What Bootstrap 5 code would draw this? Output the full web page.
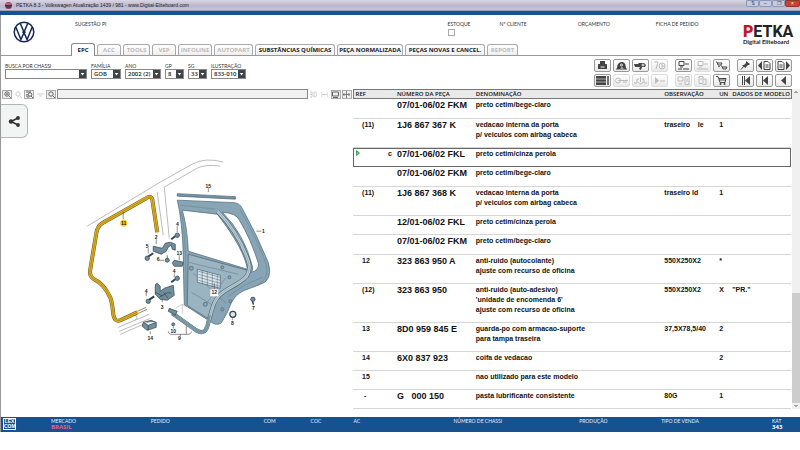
<!DOCTYPE html>
<html lang="pt-BR">
<head>
<meta charset="utf-8">
<meta name="viewport" content="width=device-width, initial-scale=1">
<title>PETKA 8.3</title>
<link href="https://cdn.jsdelivr.net/npm/bootstrap@5.3.0/dist/css/bootstrap.min.css" rel="stylesheet">
<style>
:root{--navy:#175290;--ink:#222;--rule:#d6d6d6}
body{font:5px/8px "Open Sans","Noto Sans",sans-serif;color:var(--ink);background:#fff}
button,select,input{font-family:inherit;line-height:1}
.titlebar{height:11px;background:linear-gradient(#d9d5e4,#b9b6cd 60%,#c9c5d8);border-bottom:1px solid #9f9fb5;font:5px/10px "Liberation Sans",sans-serif;padding-left:5px}
.winbtn{width:13px;height:7px;padding:0;border:1px solid #8e98b6;border-radius:0 0 2px 2px;background:#c3cbe0;color:#445;font-size:5px;line-height:5px}
.winbtn.quit{background:#c8432f;border-color:#96392d;color:#fff;width:15px}
.stripe{height:4px;background:var(--navy)}
.shell{border-left:1px solid #999}
.cap{font-family:Lato,"Open Sans",sans-serif;font-size:5px;line-height:6px;text-transform:uppercase;color:#333;white-space:nowrap}
.headgrid{display:grid;grid-template-columns:74fr 372fr 52fr 78fr 78fr 87fr 57fr;height:28px;padding-top:6px}
.headgrid>*{min-width:0}
.stockbox{width:7px;height:7px;border:1px solid #aaa;border-radius:0;margin:2px 0 0;display:block;appearance:none;background:#fff}
.brand{font:bold 16px/14px Roboto,"Liberation Sans",sans-serif;color:#222;white-space:nowrap}
.brand b{color:#c8141e}
.brandsub{font:bold 6px/6px Lato,sans-serif;color:#222;white-space:nowrap}
.tabstrip{border-bottom:1px solid #999;padding-left:70px;height:13px;gap:2px}
.tabbtn{height:11px;border:1px solid #aaa;border-bottom:0;border-radius:3px 3px 0 0;background:linear-gradient(#fff,#eee);font-size:6px;font-weight:700;line-height:10px;color:#222;padding:0;white-space:nowrap}
.tabbtn:disabled{color:#bbb}
.tabbtn.active{height:13px;margin-bottom:-1px;background:#fff;border-color:#888}
.w24{width:24px}.w27{width:27px}.w34{width:34px}.w31{width:31px}.w39{width:39px}.w66{width:66px}.w80{width:80px}
.tools{height:33px;padding:3px 8px 0 4px}
.pick{display:block;height:10px;border:1px solid #888;border-radius:0;font-size:6px;font-weight:600;color:#222;padding:0 8px 0 2px;appearance:none;background:#fff url("data:image/svg+xml,%3Csvg xmlns='http://www.w3.org/2000/svg' viewBox='0 0 7 8'%3E%3Crect width='7' height='8' fill='%23404448'/%3E%3Cpath d='M1.700 3h3.600L3.500 5.400z' fill='white'/%3E%3C/svg%3E") right 0 top 0/7px 8px no-repeat}
.p82{width:82px}.p30{width:30px}.p36{width:36px}.p19{width:19px}.p35{width:35px}
.toolset{display:flex;gap:7px}
.toolgroup{display:grid;grid-template-columns:repeat(4,17px);gap:2px;align-content:start}
.toolgroup.three-up{grid-template-columns:repeat(3,17px)}
.tool{width:17px;height:13px;border:1px solid #999;border-radius:2px;background:linear-gradient(#fff,#e9e9e9);padding:0;display:flex;align-items:center;justify-content:center;color:#444}
.tool:disabled{color:#bbb;border-color:#ddd}
.tool svg{width:13px;height:9px}
.ico{fill:none;stroke:currentColor;stroke-width:1}
.ico .f{fill:currentColor;stroke:none}
.left{flex:0 0 44%;min-width:0}
.viewbar{height:10px;gap:1px;padding:0 1px}
.mini{width:10px;height:9px;padding:0;border:1px solid #aaa;background:#eee;color:#666;display:flex;justify-content:center}
.mini:disabled{border-color:transparent;background:none;color:#ccc}
.mini svg{width:7px;height:7px}
.track{flex:1;min-width:0;height:10px;border:1px solid #888;background:#f1f1f1;padding:0;border-radius:0}
.share{left:0;top:5px;width:27px;height:34px;border:1px solid #b5b5b5;border-left:0;border-radius:0 6px 6px 0;background:#f3f5f4;padding:0}
.share svg{width:13px;height:11px}
.lbl{font:bold 5px "Liberation Sans",sans-serif;fill:#222;text-anchor:middle}
.parts{table-layout:fixed;width:100%;border-collapse:collapse;font:bold 7px/10px "Liberation Sans",sans-serif;color:#111}
.parts th{height:9px;padding:0;background:#e9e9e9;border-top:1px solid #777;border-bottom:1px solid #777;font:600 6px/7px "Open Sans",sans-serif;white-space:nowrap}
.parts th:first-child{border-left:1px solid #777;padding-left:2px}
.parts th:last-child{border-right:1px solid #777}
.parts td{height:19px;padding:1px 0 0;vertical-align:top;border-bottom:1px solid var(--rule);white-space:nowrap}
.parts td:nth-child(1){padding-left:9px}
.parts td:nth-child(2){font-size:9px}
.parts .tall td{height:20px}
.parts .two td{height:29px}
.parts .three td{height:39px}
.parts .open td{border-bottom:0}
.parts .picked{outline:1px solid #666;outline-offset:-1px}
.parts .picked td:first-child{padding-left:3px;padding-right:5px}
.flagmark{width:4px;height:6px;display:block;margin-top:1px}
.scroll{width:8px;background:#f0f0f0}
.scroll .thumb{background:#cdcdcd;flex:0 0 110px}
.scroll svg{width:8px;height:6px}
.footbar{display:grid;grid-template-columns:50fr 100fr 113fr 47fr 43fr 100fr 126fr 82fr 111fr 28fr;height:15px;background:var(--navy);color:#fff;padding-top:1px;line-height:7px;font-size:6px}
.footbar>*{min-width:0}
.footbar .cap{color:#e7eef8}
.market{color:#e0647c}
.lex{width:13px;height:12px;border:1px solid #fff;font:bold 5px/5px "Liberation Sans",sans-serif;margin-left:2px;text-align:center;white-space:nowrap}
</style>
</head>
<body>
<div class="titlebar d-flex align-items-center">
  <svg width="7" height="7" viewBox="0 0 7 7" class="me-1" aria-hidden="true"><circle cx="3.500" cy="3.500" r="3.500" fill="#963b4c"/><path d="M0 3.500h7M1 5h5" stroke="#27374f" stroke-width="1.200"/><path d="M1 2h5" stroke="#ddd" stroke-width=".6"/></svg>
  <span>PETKA 8.3 - Volkswagen Atualização 1439 / 981 - www.Digital-Eliteboard.com</span>
  <div class="ms-auto d-flex align-self-start">
    <button class="winbtn" aria-label="Ajuda">⇅</button><button class="winbtn" aria-label="Minimizar">–</button><button class="winbtn" aria-label="Restaurar">❐</button><button class="winbtn quit" aria-label="Fechar">×</button>
  </div>
</div>
<div class="stripe"></div>
<div class="shell">
<header>
  <div class="headgrid">
    <div class="ps-2 ms-1">
      <svg width="22" height="22" viewBox="0 0 22 22" role="img" aria-label="Volkswagen"><g fill="none" stroke="#14285a" stroke-width="1.500"><circle cx="11" cy="11" r="9.800"/><path d="M7.300 2.500 11 11l3.700-8.500M9.300 11.200h3.400M2.900 6.200 7.900 18.600 11 11.600l3.100 7L19.100 6.200"/></g></svg>
    </div>
    <div class="cap">Sugestão PI</div>
    <div class="cap"><label for="stock" class="d-block">Estoque</label><input type="checkbox" id="stock" class="stockbox"></div>
    <div class="cap">Nº Cliente</div>
    <div class="cap">Orçamento</div>
    <div class="cap">Ficha de pedido</div>
    <div class="pt-1"><div class="brand"><b>P</b>ETKA</div><div class="brandsub">Digital Eliteboard</div></div>
  </div>
  <nav class="tabstrip d-flex align-items-end">
    <button class="tabbtn active w24">EPC</button>
    <button class="tabbtn w24" disabled>ACC</button>
    <button class="tabbtn w27" disabled>TOOLS</button>
    <button class="tabbtn w24" disabled>VEP</button>
    <button class="tabbtn w34" disabled>INFOLINE</button>
    <button class="tabbtn w39" disabled>AUTOPART</button>
    <button class="tabbtn w80">SUBSTÂNCIAS QUÍMICAS</button>
    <button class="tabbtn w66">PEÇA NORMALIZADA</button>
    <button class="tabbtn w80">PEÇAS NOVAS E CANCEL.</button>
    <button class="tabbtn w31" disabled>REPORT</button>
  </nav>
  <div class="tools d-flex justify-content-between">
    <form class="d-flex gap-1 pt-1">
      <div><label class="cap d-block" for="chassi">Busca por chassi</label><select id="chassi" class="pick p82"><option></option></select></div>
      <div><label class="cap d-block" for="fam">Família</label><select id="fam" class="pick p30"><option>GOB</option></select></div>
      <div><label class="cap d-block" for="ano">Ano</label><select id="ano" class="pick p36"><option>2002 (2)</option></select></div>
      <div><label class="cap d-block" for="gp">GP</label><select id="gp" class="pick p19"><option>8</option></select></div>
      <div><label class="cap d-block" for="sg">SG</label><select id="sg" class="pick p19"><option>33</option></select></div>
      <div><label class="cap d-block" for="ilu">Ilustração</label><select id="ilu" class="pick p35"><option>833-010</option></select></div>
    </form>
    <div class="toolset">
      <div class="toolgroup">
        <button class="tool" aria-label="Imprimir"><svg class="ico" viewBox="0 0 13 9"><path class="f" d="M4 0h5v3h1.500l.5.500V8H2V3.500L2.500 3H4z"/><path d="M4.500 6h4" stroke="#eee"/></svg></button>
        <button class="tool" aria-label="Veículo"><svg class="ico" viewBox="0 0 13 9"><path d="M1 8h11"/><path class="f" d="M2 8c0-5 2-7 5-7s4 3 4 7H9L7 6 5 8z"/><circle cx="6.500" cy="4" r="1" stroke="#eee"/></svg></button>
        <button class="tool" aria-label="Peças"><svg class="ico" viewBox="0 0 13 9"><path class="f" d="M0 3h4l1-1h5l2 2-1 2H8L7 9 5 8l1-2H1z"/><circle cx="9" cy="4" r="1" stroke="#eee"/></svg></button>
        <button class="tool" disabled aria-label="Consulta"><svg class="ico" viewBox="0 0 13 9"><path d="M1 1h4L3 8"/><circle cx="9" cy="5" r="3"/><path d="M8 4h2v2H8"/></svg></button>
        <button class="tool" aria-label="Lista"><svg class="ico" viewBox="0 0 13 9"><path class="f" d="M0 0h10v9H0z"/><path d="M0 3h10M0 6h10" stroke="#ddd" stroke-width=".7"/><path d="M12 0v9" stroke-width="1.500"/></svg></button>
        <button class="tool" disabled aria-label="Chave"><svg class="ico" viewBox="0 0 13 9"><circle cx="3" cy="4.500" r="2.500"/><path d="M3 4.500h10M8 6h4"/></svg></button>
        <button class="tool" disabled aria-label="Ligar"><svg class="ico" viewBox="0 0 13 9"><path d="M0 7h3V3h2M6.500 1v5M8 3h2v4h3M4 6q3 4 5 0"/></svg></button>
        <button class="tool" disabled aria-label="Seguir"><svg class="ico" viewBox="0 0 13 9"><path class="f" d="M2 1l4 3.500L2 8z"/><path d="M7 5h5"/></svg></button>
      </div>
      <div class="toolgroup three-up">
        <button class="tool" aria-label="Enviar"><svg class="ico" viewBox="0 0 13 9"><path d="M2 .5h5v4H2zM3 6h3M1 8h4M6 8h6M8 3h4"/></svg></button>
        <button class="tool" disabled aria-label="Receber"><svg class="ico" viewBox="0 0 13 9"><path d="M2 .5h5v4H2zM3 6h3M1 8h11M8 3h4"/></svg></button>
        <button class="tool" aria-label="Carrinhos"><svg class="ico" viewBox="0 0 13 9"><path d="M1 1h1l1 3h3l1-2H3M6 5h1l1 3h3l1-2H8"/><circle class="f" cx="4" cy="5.500" r=".8"/></svg></button>
        <button class="tool" disabled aria-label="Computador"><svg class="ico" viewBox="0 0 13 9"><path d="M1 1h5v4H1zM2 8h3M8 .5h4v8H8zM9 3h2M9 5h2"/></svg></button>
        <button class="tool" disabled aria-label="Copiar"><svg class="ico" viewBox="0 0 13 9"><path d="M3 .5h4v7H3zM7 3h3v5.500H7M4 3h2"/></svg></button>
        <button class="tool" aria-label="Carrinho"><svg class="ico" viewBox="0 0 13 9"><path d="M1 .5h2l2 6h5l1-4H4M4 4h6"/><circle class="f" cx="5.500" cy="8" r="1"/><circle class="f" cx="9.500" cy="8" r="1"/></svg></button>
      </div>
      <div class="toolgroup three-up">
        <button class="tool" aria-label="Fixar"><svg class="ico" viewBox="0 0 13 9"><path class="f" d="M7 0l4 3-1 1-1 0-2 2v1L5 6 4 5 3 4h2l2-2z"/><path d="M5 5L2 8.500"/></svg></button>
        <button class="tool" aria-label="Página anterior"><svg class="ico" viewBox="0 0 13 9"><path class="f" d="M4 0v9L0 4.500z"/><path d="M6 .5h4l2 2v6H6zM7.500 4h3M7.500 6h3"/></svg></button>
        <button class="tool" aria-label="Próxima página"><svg class="ico" viewBox="0 0 13 9"><path class="f" d="M9 0v9l4-4.500z"/><path d="M1 .5h4l2 2v6H1zM2.500 4h3M2.500 6h3"/></svg></button>
        <button class="tool" aria-label="Primeiro"><svg class="ico" viewBox="0 0 13 9"><path d="M3.500 0v9M5.500 0v9"/><path class="f" d="M11 0v9L6 4.500z"/></svg></button>
        <button class="tool" aria-label="Início"><svg class="ico" viewBox="0 0 13 9"><path d="M4.500 0v9"/><path class="f" d="M10 0v9L5 4.500z"/></svg></button>
        <button class="tool" aria-label="Voltar"><svg class="ico" viewBox="0 0 13 9"><path class="f" d="M9 0v9L4 4.500z"/></svg></button>
      </div>
    </div>
  </div>
</header>
<main class="d-flex">
  <section class="left">
    <div class="viewbar d-flex align-items-center">
      <button class="mini" aria-label="Ampliar"><svg class="ico" viewBox="0 0 7 7"><circle cx="3" cy="3" r="2.200"/><path d="M4.500 4.500L7 7M2 3h2M3 2v2" stroke-width=".8"/></svg></button>
      <button class="mini" disabled aria-label="Reduzir"><svg class="ico" viewBox="0 0 7 7"><circle cx="3" cy="3" r="2.200"/><path d="M4.500 4.500L7 7"/></svg></button>
      <button class="mini" aria-label="Ajustar"><svg class="ico" viewBox="0 0 7 7"><path d="M0 1h5M1 3v3h2"/><circle cx="4" cy="3.500" r="1.800"/><path d="M5 5l2 2"/></svg></button>
      <button class="mini" disabled aria-label="Mover"><svg class="ico" viewBox="0 0 7 7"><path d="M0 3h7M2 5h3"/></svg></button>
      <button class="mini" aria-label="Lupa"><svg class="ico" viewBox="0 0 7 7"><circle cx="3" cy="3" r="2.200"/><path d="M4.500 4.500L7 7"/></svg></button>
      <input class="track" aria-label="Texto da ilustração" readonly>
      <button class="mini" disabled aria-label="3D"><svg class="ico" viewBox="0 0 7 7"><path d="M0 1h2v5H0M0 3.500h2M4 1v5h1.500L7 4V2L5.500 1z"/></svg></button>
      <button class="mini" disabled aria-label="Alternar"><svg class="ico" viewBox="0 0 7 7"><path d="M0 1v5M1 3.500h5M7 1v5"/></svg></button>
      <button class="mini" aria-label="Tela"><svg class="ico" viewBox="0 0 7 7"><path d="M.5 1h6v4h-6zM1 6.500h5"/></svg></button>
      <button class="mini" aria-label="Dividir"><svg class="ico" viewBox="0 0 7 7"><path d="M3.500 0v7M0 3.500h7M1.500 2L0 3.500 1.500 5M5.500 2L7 3.500 5.500 5" stroke-width=".8"/></svg></button>
    </div>
    <div class="position-relative">
      <svg class="d-block w-100" viewBox="1 99 351 318" role="img" aria-label="Porta traseira e vedações">
        <g fill="none" stroke="#aaa" stroke-width=".8">
          <path d="M87 226L160 182 192 164Q205 157 223 162M157 192l6 43M169 238l-5-51 33-19q8-4 23-2M118 327l31-13M119 331l31-13M120 334l30-13M130 318l2-3 4 0 1 3-3 2"/>
        </g>
        <path d="M157 232L152 199Q151 195 146 198L102 223Q97 226 96 234L90 270Q89 276 94 279Q104 284 110 297Q112 302 113 313Q114 322 120 320L137 312" fill="none" stroke="#6d5410" stroke-width="4"/>
        <path d="M157 232L152 199Q151 195 146 198L102 223Q97 226 96 234L90 270Q89 276 94 279Q104 284 110 297Q112 302 113 313Q114 322 120 320L137 312" fill="none" stroke="#e0b024" stroke-width="3"/>
        <path d="M157 232L152 199Q151 195 146 198L102 223Q97 226 96 234L90 270Q89 276 94 279Q104 284 110 297Q112 302 113 313Q114 322 120 320L137 312" fill="none" stroke="#8a6a12" stroke-width=".5"/>
        <path d="M137 311l9-4M138 313l9-4" stroke="#7d6c3c" stroke-width=".8"/>
        <g stroke="#4a6672" stroke-width=".7" fill="#88a5b5">
          <path d="M177 193.500l58 3v2.500l-58-3z" fill="#7794a4"/>
          <path fill-rule="evenodd" d="M177 200l57 2.500q6 1 8 6l14 27 12 27q5 18-9 22l-16 6q-8 4-12 12-4 11-10 20-4 3-9 0l-28-18q-1-38-1-50-1-34-6-54.500zM182 210q5 17 6 41l59 18q-3-20-30-55zM222 212q22 22 30 54 1 4-1 6 8-2 7-9-8-25-19-43-3-7-17-8z"/>
          <path d="M188 254l59 16q0 12-18 20-10 4-14 12l-8 16-20-13z" fill="#9bb4c1"/>
          <path d="M180 205l35 4M181 211q5 24 5 94M188 262l50 12M193 273l33 30M191 292l25 15M204 306l21-28M228 296l16-11 18-8M240 210q20 35 26 55 3 15-10 20" fill="none" stroke="#6d8996"/>
          <path d="M197 269l23 6v13l-23-6z" fill="#dae4ea"/>
          <path d="M198 271l22 6M198 274l22 6M198 277l22 6M198 280l22 6M202 270v14M207 271v14M212 273v14M217 274v14" stroke-width=".5"/>
          <circle cx="222" cy="267" r="1.500"/><circle cx="229" cy="277" r="1.500"/><circle cx="205" cy="304" r="2"/><circle cx="230" cy="301" r="1.500"/><circle cx="191" cy="268" r="2"/><circle cx="222" cy="309" r="1.500"/>
        </g>
        <g fill="none"><path d="M217 211Q238 232 248 261q4 14-9 21l-15 9q-9 6-12 17l-5 18q-3 9-11 4l-24-17" stroke="#4a6672" stroke-width="4.200"/><path d="M217 211Q238 232 248 261q4 14-9 21l-15 9q-9 6-12 17l-5 18q-3 9-11 4l-24-17" stroke="#b9cbd3" stroke-width="3"/><path d="M209 315l-2 11q-3 9-11 4l-24-17" stroke="#7896a5" stroke-width="3"/><path d="M217 211Q238 232 248 261q4 14-9 21l-15 9q-9 6-12 17l-5 18q-3 9-11 4l-24-17" stroke="#7c98a5" stroke-width=".5"/></g>
        <path d="M175 308l7-4v9M182 304l4 3" fill="none" stroke="#aaa" stroke-width=".6"/>
        <g stroke="#2d434e" stroke-width=".7" fill="#718e9c">
          <path d="M153 246l9 2 3-5 5-1 5 2 0 6-3-1-1-4-3 2-2 4-5 3-8-3z"/>
          <path d="M155 294v-8q0-3 2-3l3 3v5l4-3 9-3 1 10-7 5-7-1-4-4z"/>
          <path d="M159 297l9-5 3 1M163 292l5 6M155 292l8 4"/>
          <path d="M172 263l2-3 9 2-1 4-8 0z"/>
          <path d="M143 322l8-2 5 2v5l-9 3-5-4zM143 322l5 3 8-3M148 325v5"/>
          <path d="M169 308l8 3-2 4-7-4z"/>
          <path d="M171 239l4-3M147 257l6-4M171 282l4-3M148 300l6-4" stroke-width="2"/>
          <circle cx="177" cy="235" r="2.200"/><circle cx="147" cy="258" r="2.200"/><circle cx="177" cy="278" r="2.200"/><circle cx="148" cy="301" r="2.200"/>
          <circle cx="252.500" cy="299" r="2.200"/><path d="M252 301l1 3" stroke-width="1.500"/>
          <circle cx="232.500" cy="314" r="3" fill="#dfe7eb" stroke-width="1.200"/><circle cx="167" cy="260" r="2"/><circle cx="173" cy="324" r="1.500"/>
          <path d="M167 255v4"/>
        </g>
        <path d="M123 212v7M156 239v5M177 226v6M208 188v4M256 231h5M148 248v5M159 260h5M179 255v5M174 273v4M146 292v4M162 302v-4M150 334v-3M173 326v2M214 289v-6M253 305v-2M232 320v-2M168 331q0 3 4 3h15q4 0 4-3M180 334v2M186 325v9" fill="none" stroke="#444" stroke-width=".6"/>
        <circle cx="123.500" cy="223" r="3.500" fill="#f2cf22"/>
        <rect x="210" y="289" width="8" height="7" fill="#fff"/>
        <g class="lbl"><text x="123.500" y="225">11</text><text x="208" y="188">15</text><text x="263" y="233">1</text><text x="177" y="226">4</text><text x="179" y="255">13</text><text x="174" y="273">4</text><text x="214" y="294">12</text><text x="253" y="310">7</text><text x="232" y="325">8</text><text x="173" y="333">10</text><text x="179" y="340">9</text><text x="156" y="239">2</text><text x="147" y="248">5</text><text x="158" y="261">6</text><text x="146" y="293">4</text><text x="162" y="309">3</text><text x="150" y="340">14</text></g>
      </svg>
      <button class="share position-absolute" aria-label="Compartilhar"><svg viewBox="0 0 13 11"><path d="M10 2L3 5.500 10 9" fill="none" stroke="#333" stroke-width="1.500"/><g fill="#333"><circle cx="10" cy="2" r="1.900"/><circle cx="3" cy="5.500" r="2.200"/><circle cx="10" cy="9" r="1.900"/></g></svg></button>
    </div>
  </section>
  <section class="flex-grow-1 d-flex">
    <div class="flex-grow-1">
    <table class="parts">
      <colgroup><col style="width:10%"><col style="width:18%"><col style="width:43%"><col style="width:12.500%"><col style="width:3%"><col style="width:13.500%"></colgroup>
      <thead><tr><th>REF</th><th>NÚMERO DA PEÇA</th><th>DENOMINAÇÃO</th><th>OBSERVAÇÃO</th><th>UN</th><th>DADOS DE MODELO</th></tr></thead>
      <tbody>
      <tr class="tall"><td></td><td>07/01-06/02 FKM</td><td>preto cetim/bege-claro</td><td></td><td></td><td></td></tr>
      <tr class="two"><td>(11)</td><td>1J6 867 367 K</td><td>vedacao interna da porta<br>p/ veiculos com airbag cabeca</td><td>traseiro &nbsp;&nbsp; le</td><td>1</td><td></td></tr>
      <tr class="picked open"><td><span class="d-flex justify-content-between"><svg class="flagmark" viewBox="0 0 4 6"><path d="M.5.500L3.500 3 .5 5.500z" fill="#7c6" stroke="#285" stroke-width=".8"/></svg><span>c</span></span></td><td>07/01-06/02 FKL</td><td>preto cetim/cinza perola</td><td></td><td></td><td></td></tr>
      <tr class="tall"><td></td><td>07/01-06/02 FKM</td><td>preto cetim/bege-claro</td><td></td><td></td><td></td></tr>
      <tr class="two"><td>(11)</td><td>1J6 867 368 K</td><td>vedacao interna da porta<br>p/ veiculos com airbag cabeca</td><td>traseiro ld</td><td>1</td><td></td></tr>
      <tr><td></td><td>12/01-06/02 FKL</td><td>preto cetim/cinza perola</td><td></td><td></td><td></td></tr>
      <tr class="tall"><td></td><td>07/01-06/02 FKM</td><td>preto cetim/bege-claro</td><td></td><td></td><td></td></tr>
      <tr class="two"><td>12</td><td>323 863 950 A</td><td>anti-ruido (autocolante)<br>ajuste com recurso de oficina</td><td>550X250X2</td><td>*</td><td></td></tr>
      <tr class="three"><td>(12)</td><td>323 863 950</td><td>anti-ruido (auto-adesivo)<br>'unidade de encomenda 6'<br>ajuste com recurso de oficina</td><td>550X250X2</td><td>X</td><td>"PR."</td></tr>
      <tr class="two"><td>13</td><td>8D0 959 845 E</td><td>guarda-po com armacao-suporte<br>para tampa traseira</td><td>37,5X78,5/40</td><td>2</td><td></td></tr>
      <tr><td>14</td><td>6X0 837 923</td><td>coifa de vedacao</td><td></td><td>2</td><td></td></tr>
      <tr><td>15</td><td></td><td>nao utilizado para este modelo</td><td></td><td></td><td></td></tr>
      <tr><td>&nbsp;-</td><td>G &nbsp; 000 150</td><td>pasta lubrificante consistente</td><td>80G</td><td>1</td><td></td></tr>
      </tbody>
    </table>
    </div>
    <div class="scroll d-flex flex-column mb-2">
      <svg viewBox="0 0 8 6"><path d="M2.500 4L4 2.500 5.500 4" fill="none" stroke="#555"/></svg>
      <div class="flex-grow-1"></div><div class="thumb"></div>
      <svg viewBox="0 0 8 6"><path d="M2.500 2L4 3.500 5.500 2" fill="none" stroke="#555"/></svg>
    </div>
  </section>
</main>
<footer class="footbar">
  <div><div class="lex">LEX<br>COM</div></div>
  <div><div class="cap">Mercado</div><div class="market fw-bold">BRASIL</div></div>
  <div class="cap">Pedido</div><div class="cap">COM</div><div class="cap">COC</div><div class="cap">AC</div><div class="cap">Número de chassi</div><div class="cap">Produção</div><div class="cap">Tipo de venda</div>
  <div><div class="cap">KAT</div><div class="fw-bold">343</div></div>
</footer>
</div>
<script src="https://cdn.jsdelivr.net/npm/bootstrap@5.3.0/dist/js/bootstrap.bundle.min.js"></script>
</body>
</html>
